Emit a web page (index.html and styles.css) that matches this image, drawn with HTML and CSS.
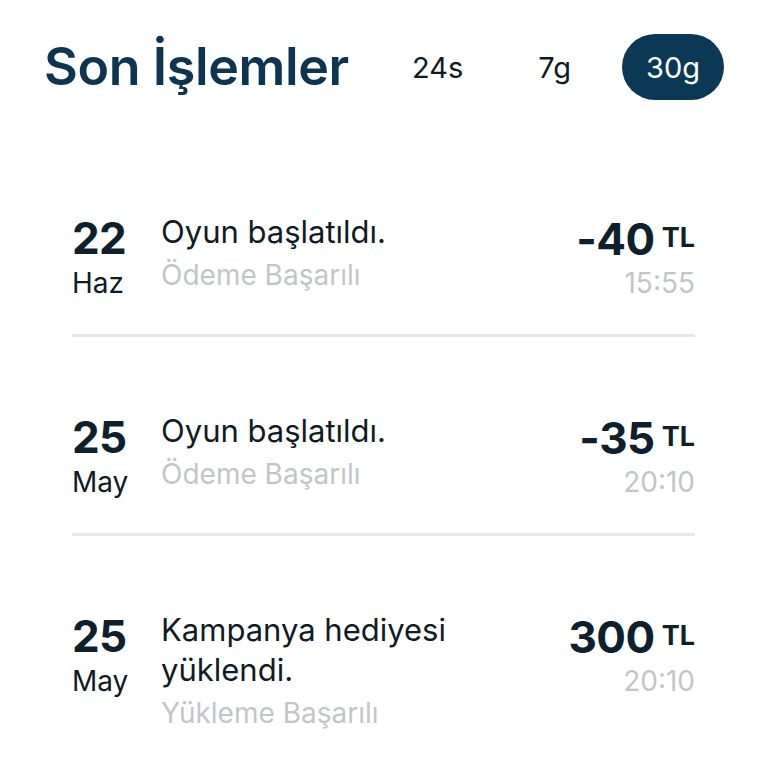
FILE: index.html
```html
<!DOCTYPE html>
<html lang="tr">
<head>
<meta charset="utf-8">
<title>Son İşlemler</title>
<link rel="stylesheet" href="styles.css">
</head>
<body>
<div class="page">
  <header class="header">
    <h1 class="title">Son İşlemler</h1>
    <nav class="tabs">
      <span class="tab">24s</span>
      <span class="tab">7g</span>
      <span class="tab active">30g</span>
    </nav>
  </header>
  <ul class="list">
    <li class="row">
      <div class="date"><span class="day">22</span><span class="month">Haz</span></div>
      <div class="info"><span class="name">Oyun başlatıldı.</span><span class="status">Ödeme Başarılı</span></div>
      <div class="amount"><div class="sum"><span class="num">-40</span><span class="cur">TL</span></div><span class="time">15:55</span></div>
    </li>
    <li class="row">
      <div class="date"><span class="day">25</span><span class="month">May</span></div>
      <div class="info"><span class="name">Oyun başlatıldı.</span><span class="status">Ödeme Başarılı</span></div>
      <div class="amount"><div class="sum"><span class="num">-35</span><span class="cur">TL</span></div><span class="time">20:10</span></div>
    </li>
    <li class="row">
      <div class="date"><span class="day">25</span><span class="month">May</span></div>
      <div class="info"><span class="name">Kampanya hediyesi yüklendi.</span><span class="status">Yükleme Başarılı</span></div>
      <div class="amount"><div class="sum"><span class="num">300</span><span class="cur">TL</span></div><span class="time">20:10</span></div>
    </li>
  </ul>
</div>
</body>
</html>
```
FILE: styles.css
```css
* { box-sizing: border-box; }
html, body { margin: 0; padding: 0; background: #ffffff; }
body { font-family: Inter, "Noto Sans", sans-serif; color: #111b24; }
.page { width: 768px; height: 768px; overflow: hidden; }
.header {
  display: flex;
  align-items: flex-start;
  justify-content: space-between;
  padding: 34px 44px 0 44px;
  height: 138px;
}
.title {
  margin: 0;
  font-size: 52px;
  line-height: 66px;
  font-weight: 600;
  color: #0e3450;
  letter-spacing: -0.4px;
}
.tabs { display: flex; align-items: center; gap: 27px; }
.tab {
  height: 66px;
  display: flex;
  align-items: center;
  padding: 0 24px;
  font-size: 29px;
  color: #111b24;
  border-radius: 33px;
}
.tab.active { background: #0b3854; color: #ffffff; }
.list { list-style: none; margin: 0; padding: 0 73px 0 72px; }
.row {
  display: flex;
  align-items: flex-start;
  padding: 74px 0 29px 0;
  border-bottom: 3px solid #e8e8e8;
}
.row:last-child { border-bottom: none; }
.date { width: 62px; margin-right: 27px; display: flex; flex-direction: column; padding-top: 3px; }
.day { font-size: 44px; line-height: 46px; font-weight: 700; color: #0f1f2c; letter-spacing: -0.6px; }
.month { font-size: 28px; line-height: 44px; color: #111b24; }
.info { flex: 1; display: flex; flex-direction: column; }
.name { font-size: 31px; line-height: 40px; color: #111b24; }
.status { font-size: 28px; line-height: 46px; color: #c3c6c9; }
.amount { width: 170px; display: flex; flex-direction: column; align-items: flex-end; padding-top: 4px; }
.sum { display: flex; align-items: flex-start; gap: 7px; height: 46px; }
.num { font-size: 44px; line-height: 46px; font-weight: 700; color: #0f1f2c; letter-spacing: -0.5px; }
.cur { font-size: 27px; line-height: 27px; font-weight: 700; color: #0f1f2c; margin-top: 8px; }
.time { font-size: 28px; line-height: 42px; color: #c3c6c9; }
```
